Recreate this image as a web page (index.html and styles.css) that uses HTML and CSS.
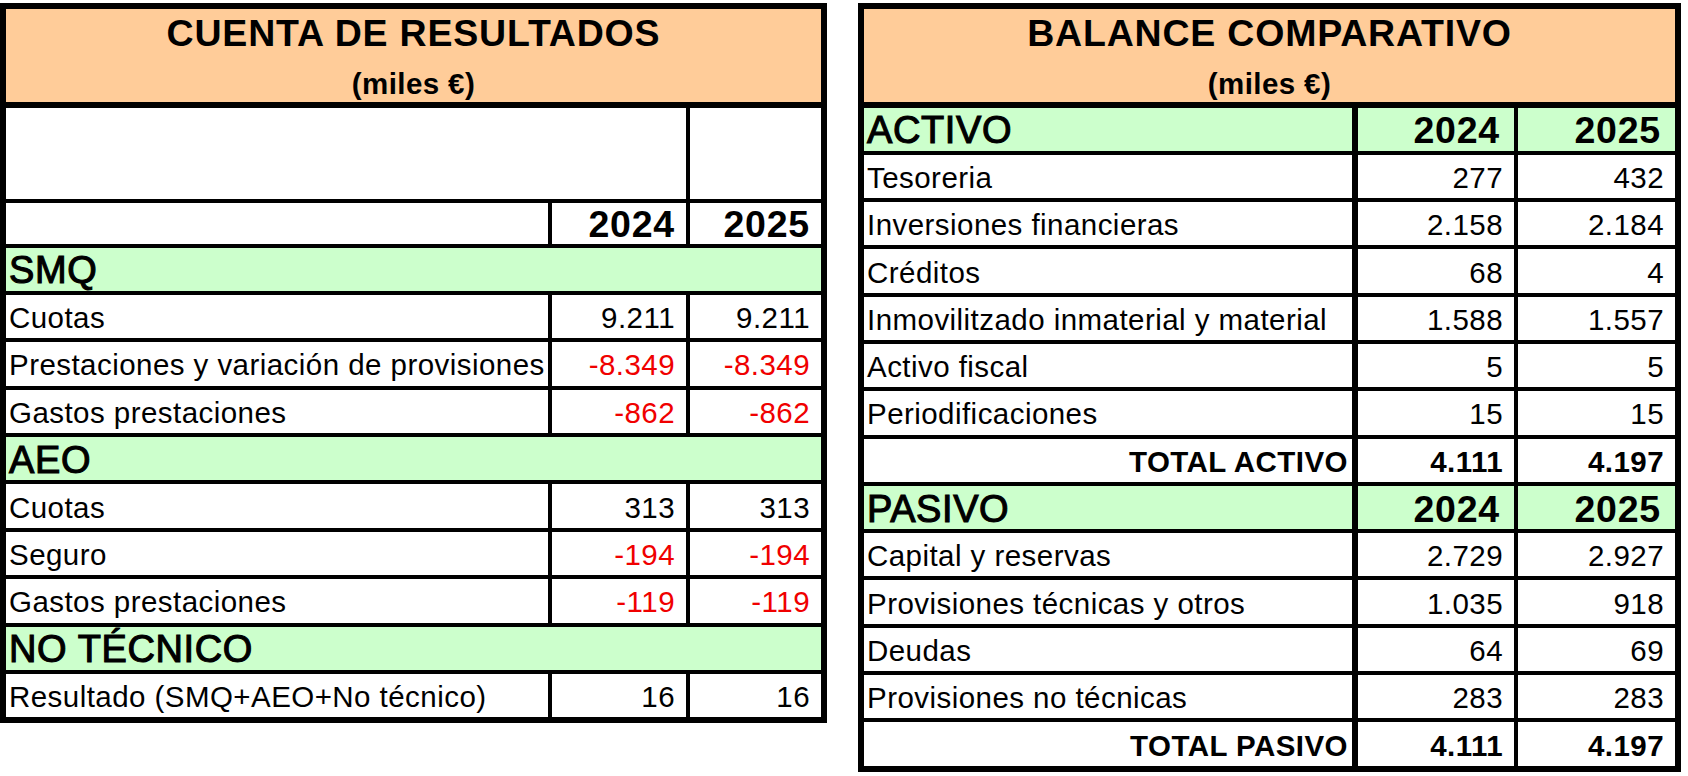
FILE: index.html
```html
<!DOCTYPE html>
<html lang="es">
<head>
<meta charset="utf-8">
<title>Cuenta de resultados y balance comparativo</title>
<link rel="stylesheet" href="styles.css">
</head>
<body>
<div class="page">
  <section class="sheet sheet-left">
    <header class="sheet-head">
      <div class="title">CUENTA DE RESULTADOS</div>
      <div class="sub">(miles €)</div>
    </header>
    <div class="grid grid-left">
      <div class="c span2"></div><div class="c"></div>
      <div class="c"></div><div class="c num year">2024</div><div class="c num year">2025</div>
      <div class="c sec span3">SMQ</div>
      <div class="c">Cuotas</div><div class="c num">9.211</div><div class="c num">9.211</div>
      <div class="c">Prestaciones y variación de provisiones</div><div class="c num neg">-8.349</div><div class="c num neg">-8.349</div>
      <div class="c">Gastos prestaciones</div><div class="c num neg">-862</div><div class="c num neg">-862</div>
      <div class="c sec span3">AEO</div>
      <div class="c">Cuotas</div><div class="c num">313</div><div class="c num">313</div>
      <div class="c">Seguro</div><div class="c num neg">-194</div><div class="c num neg">-194</div>
      <div class="c">Gastos prestaciones</div><div class="c num neg">-119</div><div class="c num neg">-119</div>
      <div class="c sec span3">NO TÉCNICO</div>
      <div class="c">Resultado (SMQ+AEO+No técnico)</div><div class="c num">16</div><div class="c num">16</div>
    </div>
  </section>

  <section class="sheet sheet-right">
    <header class="sheet-head">
      <div class="title">BALANCE COMPARATIVO</div>
      <div class="sub">(miles €)</div>
    </header>
    <div class="grid grid-right">
      <div class="c lab sec">ACTIVO</div><div class="c num green year yr">2024</div><div class="c num green year yr">2025</div>
      <div class="c lab">Tesoreria</div><div class="c num">277</div><div class="c num">432</div>
      <div class="c lab">Inversiones financieras</div><div class="c num">2.158</div><div class="c num">2.184</div>
      <div class="c lab">Créditos</div><div class="c num">68</div><div class="c num">4</div>
      <div class="c lab">Inmovilitzado inmaterial y material</div><div class="c num">1.588</div><div class="c num">1.557</div>
      <div class="c lab">Activo fiscal</div><div class="c num">5</div><div class="c num">5</div>
      <div class="c lab">Periodificaciones</div><div class="c num">15</div><div class="c num">15</div>
      <div class="c lab tot">TOTAL ACTIVO</div><div class="c num totn">4.111</div><div class="c num totn">4.197</div>
      <div class="c lab sec">PASIVO</div><div class="c num green year yr">2024</div><div class="c num green year yr">2025</div>
      <div class="c lab">Capital y reservas</div><div class="c num">2.729</div><div class="c num">2.927</div>
      <div class="c lab">Provisiones técnicas y otros</div><div class="c num">1.035</div><div class="c num">918</div>
      <div class="c lab">Deudas</div><div class="c num">64</div><div class="c num">69</div>
      <div class="c lab">Provisiones no técnicas</div><div class="c num">283</div><div class="c num">283</div>
      <div class="c lab tot">TOTAL PASIVO</div><div class="c num totn">4.111</div><div class="c num totn">4.197</div>
    </div>
  </section>
</div>
</body>
</html>
```

FILE: styles.css
```css
html, body {
  margin: 0;
  padding: 0;
  background: #ffffff;
}

body {
  font-family: "Liberation Sans", Arial, sans-serif;
  color: #000000;
}

.page {
  display: flex;
  align-items: flex-start;
  gap: 31px;
  padding-top: 3px;
}

.sheet {
  box-sizing: border-box;
  border: 6px solid #000000;
  background: #000000;
  display: flex;
  flex-direction: column;
}

.sheet-left {
  width: 827px;
}

.sheet-right {
  width: 823px;
}

.sheet-head {
  height: 92.5px;
  margin-bottom: 6px;
  background: #ffcc99;
  display: flex;
  flex-direction: column;
  align-items: center;
  font-weight: bold;
}

.title {
  margin-top: 2px;
  font-size: 37.5px;
  line-height: 44px;
  letter-spacing: 0.8px;
}

.sub {
  margin-top: 12px;
  font-size: 29.5px;
  line-height: 34px;
  letter-spacing: 0.4px;
}

.grid {
  display: grid;
  gap: 4px;
  background: #000000;
}

.grid-left {
  grid-template-columns: 542px 134px 131px;
  grid-template-rows: 91px 41px repeat(10, 43.4px);
}

.grid-right {
  grid-template-columns: 490px 156px 157px;
  grid-template-rows: repeat(14, 43.3px);
}

.c {
  box-sizing: border-box;
  background: #ffffff;
  display: flex;
  align-items: center;
  padding: 3px 2px 0 3px;
  font-size: 29.5px;
  letter-spacing: 0.45px;
  white-space: nowrap;
  min-width: 0;
}

.span2 {
  grid-column: span 2;
}

.span3 {
  grid-column: span 3;
}

.lab {
  border-right: 2px solid #000000;
}

.num {
  justify-content: flex-end;
  padding-right: 11px;
}

.neg {
  color: #f00000;
}

.green {
  background: #ccffcc;
}

.sec {
  background: #ccffcc;
  font-size: 38px;
  font-weight: normal;
  letter-spacing: 0.6px;
  -webkit-text-stroke: 1.1px #000000;
}

.year {
  font-size: 37.5px;
  font-weight: bold;
  letter-spacing: 0.8px;
}

.yr {
  padding-right: 14px;
}

.tot {
  justify-content: flex-end;
  padding-right: 4px;
  font-weight: bold;
}

.totn {
  font-weight: bold;
}
```
